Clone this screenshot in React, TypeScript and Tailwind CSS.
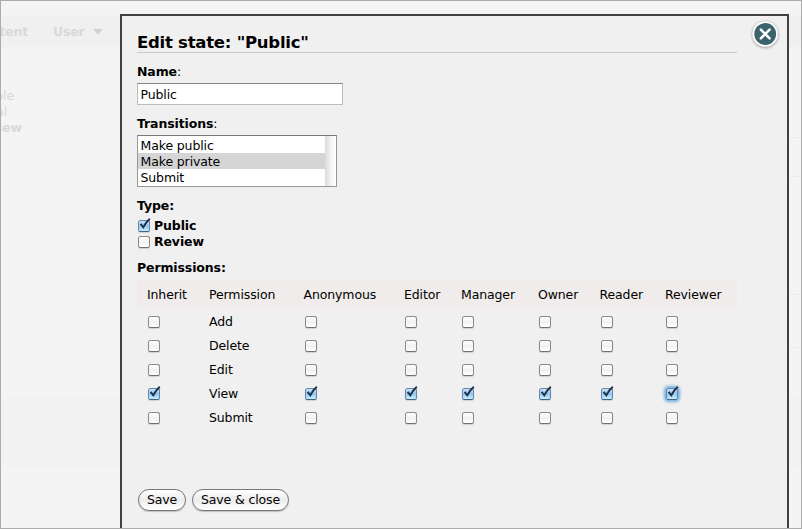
import React from "react";

const columns = ["Inherit", "Permission", "Anonymous", "Editor", "Manager", "Owner", "Reader", "Reviewer"];
const permissions = ["Add", "Delete", "Edit", "View", "Submit"];
const grid = "grid grid-cols-[62px_94.5px_100.5px_57px_77px_61.5px_65.5px_72px] pl-[10px] items-center";

function Check({ on = false, focus = false }: { on?: boolean; focus?: boolean }) {
  const box = on
    ? "border-[#6686ab] border-b-[#44617d] bg-linear-to-b from-[#cfe2f5] via-[#93c5ef] to-[#c5f0ff]"
    : "border-[#8c8c8c] border-b-[#707070] bg-linear-to-b from-white via-[#f1f1f1] to-white";
  const glow = focus ? "shadow-[0_0_3px_2px_#78aee0]" : "shadow-[0_1px_1px_#00000022]";
  return (
    <span role="checkbox" aria-checked={on} className={`relative block h-3 w-3 shrink-0 rounded-[2.5px] border ${box} ${glow}`}>
      {on && (
        <svg className="absolute -left-px -top-[3px]" width="13" height="14" viewBox="0 0 13 14" fill="none">
          <path d="M2.6 5.8 5.3 9.3C7.2 5.8 9 3.2 11.8.8" stroke="#1d3148" strokeWidth="1.9" />
        </svg>
      )}
    </span>
  );
}

function Close() {
  return (
    <svg className="absolute left-[628px] top-[3px]" width="30" height="32" viewBox="0 0 30 32" aria-label="Close">
      <defs>
        <filter id="closeShadow" x="-30%" y="-30%" width="160%" height="160%">
          <feDropShadow dx="0" dy=".6" stdDeviation="1.4" floodColor="#000" floodOpacity=".5" />
        </filter>
      </defs>
      <circle cx="15.2" cy="15" r="12.6" fill="#fff" filter="url(#closeShadow)" />
      <circle cx="15.2" cy="15" r="10.9" fill="#3c636b" />
      <path d="m10.8 10.6 8.8 8.8m0-8.8-8.8 8.8" stroke="#fff" strokeWidth="2.5" strokeLinecap="round" />
    </svg>
  );
}

function Background() {
  return (
    <div className="flex h-full flex-col text-[#d9d9d9]">
      <div className="mt-[15px] flex h-[31px] items-center bg-[#f0f0f0] text-[12.5px] font-bold tracking-[-0.15px]">
        <span className="flex w-[27px] justify-end">tent</span>
        <span className="ml-[25px]">User</span>
        <svg className="ml-2" width="10" height="6" viewBox="0 0 10 6"><path d="M0 0h10L5 5.5z" fill="#d0d0d0" /></svg>
      </div>
      <div className="mt-[41px] h-12 w-[60px] text-[12.5px] leading-4">
        <div className="flex w-[13px] justify-end">ple</div>
        <div className="flex w-[6px] justify-end">al</div>
        <div className="flex w-[21px] justify-end font-bold">iew</div>
      </div>
      <div className="mt-[1px] h-px w-4 self-end bg-[#ededed]" />
      <div className="mt-[38px] h-px w-4 self-end bg-[#ededed]" />
      <div className="mt-[117px] h-px w-4 self-end bg-[#ededed]" />
      <div className="mt-[52px] h-px w-4 self-end bg-[#ededed]" />
      <div className="mt-[50px] h-[68px] bg-[#f2f2f2]" />
    </div>
  );
}

export default function App() {
  return (
    <main className="relative h-[529px] w-[802px] overflow-hidden border border-[#acacac] bg-[#f4f4f4] font-['DejaVu_Sans',Verdana,sans-serif] text-[12.5px] leading-4 tracking-[-0.12px] text-black">
      <Background />
      <section className="absolute left-[119px] top-[13px] flex h-[514px] w-[669px] flex-col items-start border-x-2 border-t-2 border-[#424242] bg-[#f0f0f0] pl-[15px]">
        <Close />
        <h1 className="mt-[16px] h-[21px] w-[600px] border-b border-[#c9c9c9] pt-px text-[16.5px] font-bold leading-5 tracking-[-0.25px]">Edit state: "Public"</h1>
        <div className="mt-[11px]"><b>Name</b>:</div>
        <div className="mt-[3px] flex h-[22px] w-[206px] items-center border border-[#bcbcbc] border-t-[#858585] bg-white pl-[2.5px] pt-px">Public</div>
        <div className="mt-[11px]"><b>Transitions</b>:</div>
        <div className="mt-[3px] flex h-[52px] w-[200px] border border-[#979797] border-t-[#777] bg-white">
          <div className="flex-1 pt-px">
            <div className="h-4 pl-[2.5px] leading-[18px]">Make public</div>
            <div className="h-4 bg-[#d5d5d5] pl-[2.5px] leading-[18px]">Make private</div>
            <div className="h-4 pl-[2.5px] leading-[18px]">Submit</div>
          </div>
          <div className="w-[11px] bg-linear-to-r from-[#dcdcdc] via-[#f2f2f2] to-white" />
        </div>
        <b className="mt-[11px]">Type:</b>
        <div className="mt-1 ml-px flex h-4 items-center gap-1"><Check on /><b>Public</b></div>
        <div className="ml-px flex h-4 items-center gap-1"><Check /><b>Review</b></div>
        <b className="mt-[10px]">Permissions:</b>
        <div className={`mt-[3px] h-[30px] w-[600px] bg-[#f0eceb] pt-[2px] ${grid}`}>
          {columns.map((name) => <span key={name}>{name}</span>)}
        </div>
        <div className="mt-px">
          {permissions.map((permission) => (
            <div key={permission} className={`h-6 w-[600px] ${grid}`}>
              {columns.map((column) => column === "Permission"
                ? <span key={column}>{permission}</span>
                : <span key={column} className="pl-px"><Check on={permission === "View"} focus={permission === "View" && column === "Reviewer"} /></span>)}
            </div>
          ))}
        </div>
        <div className="mt-[59px] ml-px flex gap-[6px]">
          <button className="h-[22px] w-12 rounded-full border border-[#777] bg-linear-to-b from-white via-[#ececec] to-white shadow-[0_1px_1px_#00000033]">Save</button>
          <button className="h-[22px] w-[97px] rounded-full border border-[#777] bg-linear-to-b from-white via-[#ececec] to-white shadow-[0_1px_1px_#00000033]">Save &amp; close</button>
        </div>
      </section>
    </main>
  );
}
